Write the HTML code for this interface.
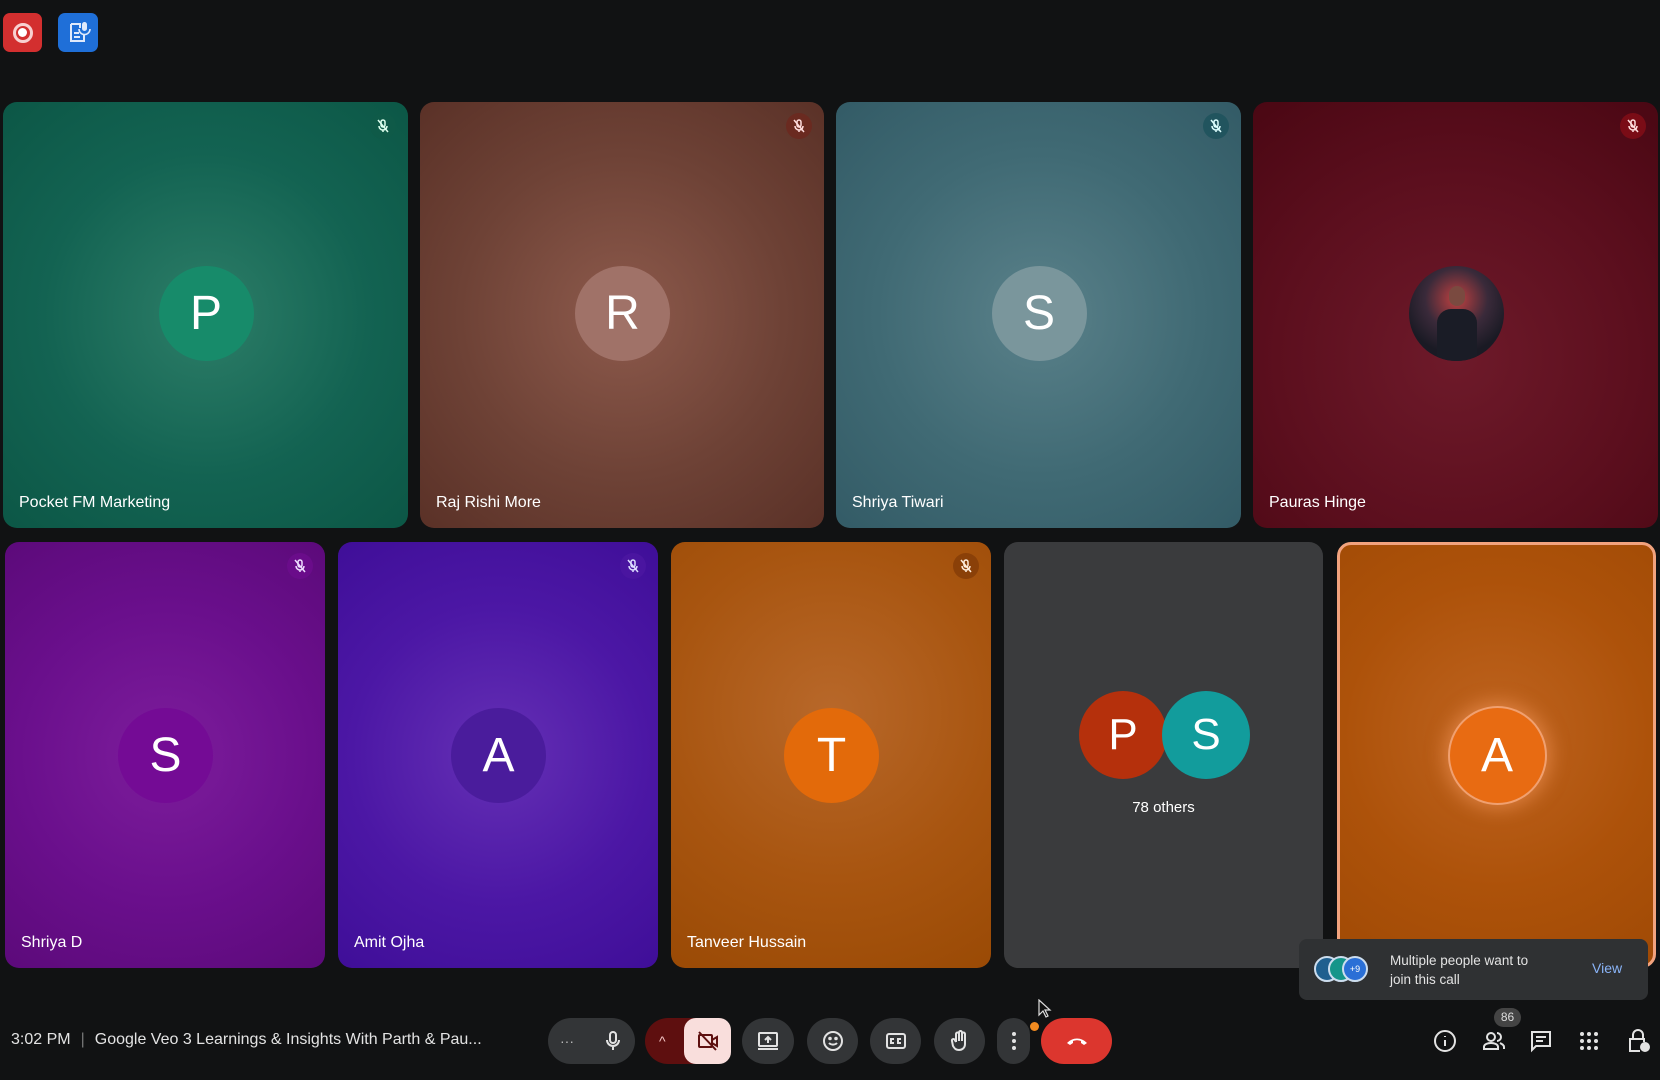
<!DOCTYPE html>
<html><head><meta charset="utf-8"><style>
*{margin:0;padding:0;box-sizing:border-box}
body{width:1660px;height:1080px;background:#111213;position:relative;overflow:hidden;font-family:"Liberation Sans",Arial,sans-serif;color:#fff}
.t{position:absolute;border-radius:14px;overflow:hidden}
.av{position:absolute;width:95px;height:95px;border-radius:50%;left:50%;margin-left:-47px;top:164px;display:flex;align-items:center;justify-content:center;font-size:48px;color:#fff}
.nm{position:absolute;left:16px;bottom:16px;font-size:16px;color:#fff}
.mu{position:absolute;width:26px;height:26px;border-radius:50%;top:11px;right:12px;display:flex;align-items:center;justify-content:center}
.b{position:absolute;top:1018px;height:46px;border-radius:23px;background:#333537;display:flex;align-items:center;justify-content:center}
.ri{position:absolute;top:1029px;width:24px;height:24px}
</style></head><body>
<div style="position:absolute;left:3px;top:13px;width:39px;height:39px;border-radius:7px;background:#d32f2f;display:flex;align-items:center;justify-content:center"><div style="width:20px;height:20px;border-radius:50%;border:3px solid #f8d0d0;display:flex;align-items:center;justify-content:center"><div style="width:9px;height:9px;border-radius:50%;background:#fff"></div></div></div>
<div style="position:absolute;left:58px;top:13px;width:40px;height:39px;border-radius:7px;background:#1f6fd8"><svg width="40" height="39" viewBox="0 0 40 39"><path d="M13 11h9v4M13 11v17h13v-6" fill="none" stroke="#dfe9fb" stroke-width="2"/><rect x="24" y="9" width="5" height="9" rx="2.5" fill="#dfe9fb"/><path d="M21 16a5.5 5.5 0 0011 0" fill="none" stroke="#dfe9fb" stroke-width="1.6"/><path d="M16 20h5M16 24h6" stroke="#dfe9fb" stroke-width="2"/></svg></div>

<!-- row1 -->
<div class="t" style="left:3px;top:102px;width:405px;height:426px;background:radial-gradient(circle at 50% 50%,#2d7e68 0%,#136352 55%,#0c5746 100%)"><div class="mu" style="background:#0f5a48"><svg width="14" height="14" viewBox="0 0 14 14" stroke="#dfe" stroke-width="1.5" fill="none"><rect x="5" y="1" width="4" height="7" rx="2"/><path d="M3 7a4 4 0 008 0M7 11v2M2 1l10 12"/></svg></div><div class="av" style="background:#178b6a">P</div><div class="nm">Pocket FM Marketing</div></div>
<div class="t" style="left:420px;top:102px;width:404px;height:426px;background:radial-gradient(circle at 50% 50%,#8d5a4c 0%,#6e4236 55%,#5a3127 100%)"><div class="mu" style="background:#6a2a20"><svg width="14" height="14" viewBox="0 0 14 14" stroke="#fdd" stroke-width="1.5" fill="none"><rect x="5" y="1" width="4" height="7" rx="2"/><path d="M3 7a4 4 0 008 0M7 11v2M2 1l10 12"/></svg></div><div class="av" style="background:#a07268">R</div><div class="nm">Raj Rishi More</div></div>
<div class="t" style="left:836px;top:102px;width:405px;height:426px;background:radial-gradient(circle at 50% 50%,#5a818a 0%,#406a74 55%,#335b66 100%)"><div class="mu" style="background:#21545e"><svg width="14" height="14" viewBox="0 0 14 14" stroke="#dff" stroke-width="1.5" fill="none"><rect x="5" y="1" width="4" height="7" rx="2"/><path d="M3 7a4 4 0 008 0M7 11v2M2 1l10 12"/></svg></div><div class="av" style="background:#7a969c">S</div><div class="nm">Shriya Tiwari</div></div>
<div class="t" style="left:1253px;top:102px;width:405px;height:426px;background:radial-gradient(circle at 50% 60%,#6e1a2a 0%,#5c0f1e 55%,#4a0713 100%)"><div class="mu" style="background:#7a0c16"><svg width="14" height="14" viewBox="0 0 14 14" stroke="#fdd" stroke-width="1.5" fill="none"><rect x="5" y="1" width="4" height="7" rx="2"/><path d="M3 7a4 4 0 008 0M7 11v2M2 1l10 12"/></svg></div><div class="av" style="background:radial-gradient(circle at 50% 35%,#c04040 0%,#3a2a3a 40%,#1a1a24 70%);overflow:hidden"><div style="position:absolute;bottom:0;left:28px;width:40px;height:52px;background:#1a1c26;border-radius:14px 14px 0 0"></div><div style="position:absolute;top:20px;left:40px;width:16px;height:20px;border-radius:8px;background:#7a4a40"></div></div><div class="nm">Pauras Hinge</div></div>

<!-- row2 -->
<div class="t" style="left:5px;top:542px;width:320px;height:426px;background:radial-gradient(circle at 50% 50%,#7d1d9c 0%,#6a0f8c 55%,#5c0a7a 100%)"><div class="mu" style="background:#6a0c8a"><svg width="14" height="14" viewBox="0 0 14 14" stroke="#edf" stroke-width="1.5" fill="none"><rect x="5" y="1" width="4" height="7" rx="2"/><path d="M3 7a4 4 0 008 0M7 11v2M2 1l10 12"/></svg></div><div class="av" style="background:#740b95;top:166px">S</div><div class="nm">Shriya D</div></div>
<div class="t" style="left:338px;top:542px;width:320px;height:426px;background:radial-gradient(circle at 50% 50%,#6530b5 0%,#4c17a5 55%,#3f0e98 100%)"><div class="mu" style="background:#4a15a0"><svg width="14" height="14" viewBox="0 0 14 14" stroke="#ddf" stroke-width="1.5" fill="none"><rect x="5" y="1" width="4" height="7" rx="2"/><path d="M3 7a4 4 0 008 0M7 11v2M2 1l10 12"/></svg></div><div class="av" style="background:#4a1c9c;top:166px">A</div><div class="nm">Amit Ojha</div></div>
<div class="t" style="left:671px;top:542px;width:320px;height:426px;background:radial-gradient(circle at 50% 40%,#b8682a 0%,#a85510 55%,#9a4a05 100%)"><div class="mu" style="background:#8a4008"><svg width="14" height="14" viewBox="0 0 14 14" stroke="#fed" stroke-width="1.5" fill="none"><rect x="5" y="1" width="4" height="7" rx="2"/><path d="M3 7a4 4 0 008 0M7 11v2M2 1l10 12"/></svg></div><div class="av" style="background:#e36a0a;top:166px">T</div><div class="nm">Tanveer Hussain</div></div>
<div class="t" style="left:1004px;top:542px;width:319px;height:426px;background:#3a3b3d"><div style="position:absolute;left:75px;top:149px;width:88px;height:88px;border-radius:50%;background:#b5300c;display:flex;align-items:center;justify-content:center;font-size:44px">P</div><div style="position:absolute;left:158px;top:149px;width:88px;height:88px;border-radius:50%;background:#129c9c;display:flex;align-items:center;justify-content:center;font-size:44px">S</div><div style="position:absolute;left:0;width:100%;top:257px;text-align:center;font-size:15px">78 others</div></div>
<div class="t" style="left:1337px;top:542px;width:319px;height:426px;background:radial-gradient(circle at 50% 45%,#bf6420 0%,#ad520a 55%,#a04a05 100%);border:3px solid #f2a37e"><div class="av" style="background:#e86b12;top:163px;box-shadow:0 0 0 2px #f0a070,0 0 18px 6px rgba(255,160,100,.5)">A</div></div>

<!-- notification -->
<div style="position:absolute;left:1299px;top:939px;width:349px;height:61px;background:#2f3133;border-radius:8px">
<div style="position:absolute;left:15px;top:17px;width:26px;height:26px;border-radius:50%;background:#1f5f8f;border:2px solid #cde"></div>
<div style="position:absolute;left:29px;top:17px;width:26px;height:26px;border-radius:50%;background:#15958a;border:2px solid #cde"></div>
<div style="position:absolute;left:43px;top:17px;width:26px;height:26px;border-radius:50%;background:#2a6fd6;border:2px solid #cde;font-size:9px;display:flex;align-items:center;justify-content:center">+9</div>
<div style="position:absolute;left:91px;top:12px;font-size:13.5px;line-height:19px;color:#e3e3e3">Multiple people want to<br>join this call</div>
<div style="position:absolute;left:293px;top:21px;font-size:14px;color:#8ab4f8">View</div></div>

<!-- bottom bar -->
<div style="position:absolute;left:11px;top:1031px;font-size:16px;color:#e3e3e3;white-space:nowrap">3:02 PM<span style="color:#777;margin:0 10px">|</span>Google Veo 3 Learnings &amp; Insights With Parth &amp; Pau...</div>
<div class="b" style="left:548px;width:87px;justify-content:space-between;padding:0 12px"><span style="color:#bbb;font-size:14px">···</span><svg width="20" height="22" viewBox="0 0 20 22" fill="none" stroke="#e3e3e3" stroke-width="2"><rect x="7" y="2" width="6" height="11" rx="3"/><path d="M4 10a6 6 0 0012 0M10 16v4"/></svg></div>
<div class="b" style="left:645px;width:86px;background:#5e0f0f;justify-content:flex-start"><span style="margin-left:14px;color:#f3c4c4;font-size:14px">^</span><div style="position:absolute;right:0;top:0;width:47px;height:46px;border-radius:12px;background:#f9dedc;display:flex;align-items:center;justify-content:center"><svg width="22" height="20" viewBox="0 0 22 20" fill="none" stroke="#5e1010" stroke-width="2"><rect x="2" y="4" width="13" height="12" rx="1"/><path d="M15 9l5-3v9l-5-3M2 1l17 18"/></svg></div></div>
<div class="b" style="left:742px;width:52px"><svg width="22" height="20" viewBox="0 0 22 20" fill="none" stroke="#e3e3e3" stroke-width="2"><rect x="2" y="2" width="18" height="13" rx="1"/><path d="M1 18h20M11 12V6M8 9l3-3 3 3"/></svg></div>
<div class="b" style="left:807px;width:51px"><svg width="22" height="22" viewBox="0 0 22 22" fill="none" stroke="#e3e3e3" stroke-width="2"><circle cx="11" cy="11" r="9"/><path d="M7 13a5 4 0 008 0"/><circle cx="8" cy="8.5" r=".8" fill="#e3e3e3"/><circle cx="14" cy="8.5" r=".8" fill="#e3e3e3"/></svg></div>
<div class="b" style="left:870px;width:51px"><svg width="22" height="18" viewBox="0 0 22 18" fill="none" stroke="#e3e3e3" stroke-width="2"><rect x="2" y="2" width="18" height="14" rx="2"/><path d="M9 7H6v4h3M16 7h-3v4h3"/></svg></div>
<div class="b" style="left:934px;width:51px"><svg width="20" height="22" viewBox="0 0 20 22" fill="none" stroke="#e3e3e3" stroke-width="2"><path d="M6 12V4a1.5 1.5 0 013 0v7V2.5a1.5 1.5 0 013 0V11V4a1.5 1.5 0 013 0v10c0 4-3 6-6 6-3 0-4-1-6-4L2 11a1.5 1.5 0 012.5-1.5L6 12"/></svg></div>
<div class="b" style="left:997px;width:33px"><svg width="6" height="20" viewBox="0 0 6 20" fill="#e3e3e3"><circle cx="3" cy="3" r="2"/><circle cx="3" cy="10" r="2"/><circle cx="3" cy="17" r="2"/></svg></div>
<div style="position:absolute;left:1030px;top:1022px;width:9px;height:9px;border-radius:50%;background:#f28b20"></div>
<div class="b" style="left:1041px;width:71px;background:#dc362e"><svg width="24" height="12" viewBox="0 0 24 12"><path d="M2 8c6-6 14-6 20 0l-3 2-3-2V6c-3-1-5-1-8 0v2l-3 2z" fill="#fff"/></svg></div>
<svg style="position:absolute;left:1038px;top:999px" width="14" height="20" viewBox="0 0 14 20"><path d="M1 1v15l4-4 3 6 2-1-3-6h5z" fill="#111" stroke="#ddd" stroke-width="1.2"/></svg>

<svg class="ri" style="left:1433px" viewBox="0 0 24 24" fill="none" stroke="#e3e3e3" stroke-width="2"><circle cx="12" cy="12" r="10"/><path d="M12 11v6M12 7v1"/></svg>
<div style="position:absolute;left:1494px;top:1008px;width:27px;height:19px;border-radius:10px;background:#444;font-size:12px;color:#ddd;text-align:center;line-height:19px">86</div>
<svg class="ri" style="left:1482px" viewBox="0 0 24 24" fill="none" stroke="#e3e3e3" stroke-width="2"><circle cx="9" cy="8" r="4"/><path d="M2 20v-2c0-3 4-4 7-4s7 1 7 4v2zM15 4a4 4 0 010 8M18 14c2 1 4 2 4 4v2"/></svg>
<svg class="ri" style="left:1529px" viewBox="0 0 24 24" fill="none" stroke="#e3e3e3" stroke-width="2"><path d="M3 3h18v14H7l-4 4z"/><path d="M7 8h10M7 12h7"/></svg>
<svg class="ri" style="left:1577px" viewBox="0 0 24 24" fill="#e3e3e3"><circle cx="5" cy="5" r="2"/><circle cx="12" cy="5" r="2"/><circle cx="19" cy="5" r="2"/><circle cx="5" cy="12" r="2"/><circle cx="12" cy="12" r="2"/><circle cx="19" cy="12" r="2"/><circle cx="5" cy="19" r="2"/><circle cx="12" cy="19" r="2"/><circle cx="19" cy="19" r="2"/></svg>
<svg class="ri" style="left:1626px" viewBox="0 0 24 24" fill="none" stroke="#e3e3e3" stroke-width="2"><path d="M7 10V6a5 5 0 0110 0v4M14 22H4V10h14v3"/><circle cx="19" cy="18" r="4" fill="#e3e3e3"/></svg>
</body></html>
